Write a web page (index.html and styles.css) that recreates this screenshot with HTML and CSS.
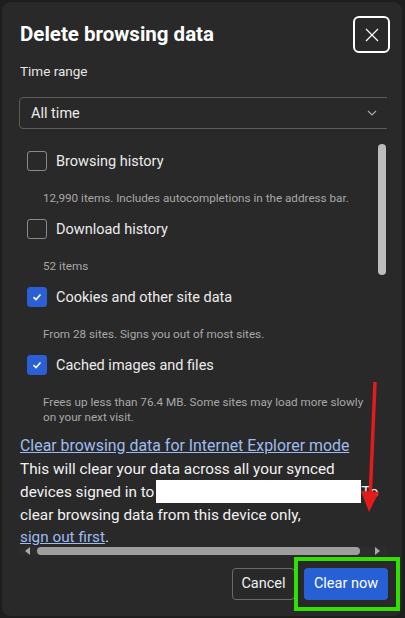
FILE: index.html
```html
<!DOCTYPE html>
<html lang="en">
<head>
<meta charset="utf-8">
<title>Delete browsing data</title>
<link rel="stylesheet" href="styles.css">
</head>
<body>
<div class="dialog">
  <div class="header">
    <h1 class="title">Delete browsing data</h1>
    <button class="close" aria-label="Close">
      <svg width="14" height="14" viewBox="0 0 14 14"><path d="M1 1L13 13M13 1L1 13" stroke="#fff" stroke-width="1.2" fill="none"/></svg>
    </button>
  </div>
  <div class="range-label">Time range</div>
  <div class="scroller">
    <div class="select">
      <span class="select-value">All time</span>
      <svg class="chev" width="10" height="6" viewBox="0 0 10 6"><path d="M1 1L5 5L9 1" stroke="#aaa" stroke-width="1.1" fill="none"/></svg>
    </div>
    <div class="list">
      <div class="items">
        <div class="item">
          <div class="row"><span class="box"></span><span class="label">Browsing history</span></div>
          <div class="sub">12,990 items. Includes autocompletions in the address bar.</div>
        </div>
        <div class="item">
          <div class="row"><span class="box"></span><span class="label">Download history</span></div>
          <div class="sub">52 items</div>
        </div>
        <div class="item">
          <div class="row"><span class="box checked"><svg width="10" height="8" viewBox="0 0 10 8"><path d="M1.5 4.2L4 6.5L8.5 1.5" stroke="#fff" stroke-width="1.6" fill="none"/></svg></span><span class="label">Cookies and other site data</span></div>
          <div class="sub">From 28 sites. Signs you out of most sites.</div>
        </div>
        <div class="item">
          <div class="row"><span class="box checked"><svg width="10" height="8" viewBox="0 0 10 8"><path d="M1.5 4.2L4 6.5L8.5 1.5" stroke="#fff" stroke-width="1.6" fill="none"/></svg></span><span class="label">Cached images and files</span></div>
          <div class="sub">Frees up less than 76.4 MB. Some sites may load more slowly<br>on your next visit.</div>
        </div>
      </div>
      <div class="vtrack"><div class="vthumb"></div></div>
    </div>
    <div class="info">
      <a class="link big" href="#">Clear browsing data for Internet Explorer mode</a><br>
      This will clear your data across all your synced<br>
      devices signed in to<span class="redact"></span>To<br>
      clear browsing data from this device only,<br>
      <a class="link" href="#">sign out first</a>.
    </div>
  </div>
  <div class="hscroll">
    <span class="arrow left"></span>
    <div class="hthumb"></div>
    <span class="arrow right"></span>
  </div>
  <div class="footer">
    <button class="btn cancel">Cancel</button>
    <button class="btn primary">Clear now</button>
  </div>
  <div class="highlight"></div>
  <svg class="red-arrow" width="40" height="150" viewBox="0 0 40 150">
    <path d="M31 2L26 120" stroke="#e41b1b" stroke-width="3.5" fill="none"/>
    <path d="M17 111L35 112L25 132Z" fill="#e41b1b"/>
  </svg>
</div>
</body>
</html>
```
FILE: styles.css
```css
* { box-sizing: border-box; }
html, body { margin: 0; padding: 0; }
body {
  background: #1e1e1e;
  width: 405px;
  height: 618px;
  overflow: hidden;
  font-family: Roboto, "Liberation Sans", sans-serif;
  color: #e8e8e8;
}
.dialog {
  position: relative;
  margin: 2px 0 0 2px;
  width: 400px;
  height: 614px;
  background: #292929;
  border-radius: 9px;
  overflow: hidden;
}
.header {
  display: flex;
  justify-content: space-between;
  align-items: flex-start;
  padding: 14px 12px 0 18px;
  height: 58px;
}
.title {
  margin: 0;
  padding-top: 6px;
  font-size: 20.5px;
  font-weight: 700;
  color: #fff;
  line-height: 24px;
}
.close {
  width: 37px;
  height: 37px;
  border: 2px solid #fff;
  border-radius: 6px;
  background: transparent;
  display: flex;
  align-items: center;
  justify-content: center;
  padding: 0;
}
.range-label {
  padding-left: 18px;
  font-size: 13.5px;
  line-height: 22px;
  color: #e6e6e6;
  height: 37px;
}
.scroller {
  margin-left: 17px;
  width: 368px;
  overflow: hidden;
}
.select {
  width: 380px;
  height: 32px;
  border: 1px solid #5c5c5c;
  border-radius: 4px;
  display: flex;
  align-items: center;
  justify-content: space-between;
  padding: 0 21px 0 11px;
  font-size: 14.5px;
  color: #ececec;
}
.select-value { white-space: nowrap; }
.list {
  display: flex;
  height: 300px;
  margin-top: 11px;
}
.items {
  flex: 1;
  padding-top: 11px;
}
.item { height: 68px; }
.item:last-child { height: 90px; }
.row {
  display: flex;
  align-items: center;
  gap: 9px;
  padding-left: 8px;
  height: 20px;
}
.box {
  width: 20px;
  height: 20px;
  border: 1px solid #8a8a8a;
  border-radius: 3px;
  display: flex;
  align-items: center;
  justify-content: center;
}
.box.checked {
  background: #2b5fd6;
  border-color: #2b5fd6;
}
.label {
  font-size: 14.5px;
  color: #ececec;
}
.sub {
  padding-left: 24px;
  margin-top: 20px;
  font-size: 11.7px;
  line-height: 15px;
  color: #a8a8a8;
}
.vtrack {
  width: 8px;
  margin-top: 4px;
  margin-right: 1px;
}
.vthumb {
  width: 8px;
  height: 131px;
  background: #bdbdbd;
  border-radius: 4px;
}
.info {
  margin-top: -5px;
  padding-left: 1px;
  font-size: 15.3px;
  line-height: 22.5px;
  color: #f2f2f2;
  white-space: nowrap;
}
.link {
  color: #9ebcf0;
  text-decoration: underline;
}
.link.big { font-size: 15.9px; }
.redact {
  display: inline-block;
  width: 205px;
  height: 23px;
  margin-left: 2px;
  background: #fff;
  vertical-align: -6px;
}
.hscroll {
  display: flex;
  align-items: center;
  margin: -2px 0 0 17px;
  width: 368px;
  height: 9px;
  background: #2c2c2c;
  padding: 0 4px 0 6px;
}
.arrow {
  width: 0;
  height: 0;
  border-top: 4px solid transparent;
  border-bottom: 4px solid transparent;
}
.arrow.left { border-right: 5px solid #a8a8a8; }
.arrow.right { border-left: 5px solid #a8a8a8; }
.hthumb {
  width: 323px;
  height: 8px;
  margin: 0 15px 0 7px;
  background: #9e9e9e;
  border-radius: 4px;
}
.footer {
  display: flex;
  justify-content: flex-end;
  gap: 9px;
  padding: 12px 14px 0 0;
}
.btn {
  height: 32px;
  border-radius: 4px;
  font-family: inherit;
  font-size: 14.5px;
  padding: 0;
}
.cancel {
  width: 63px;
  background: transparent;
  border: 1px solid #6a6a6a;
  color: #f0f0f0;
}
.primary {
  width: 84px;
  background: #2760d4;
  border: none;
  color: #fff;
}
.highlight {
  position: absolute;
  left: 292px;
  top: 555px;
  width: 106px;
  height: 54px;
  border: 4px solid #30e000;
}
.red-arrow {
  position: absolute;
  left: 342px;
  top: 378px;
}
```
